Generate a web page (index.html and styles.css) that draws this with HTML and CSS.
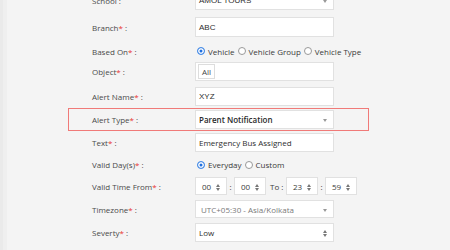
FILE: index.html
```html
<!DOCTYPE html>
<html>
<head>
<meta charset="utf-8">
<link rel="stylesheet" href="styles.css">
</head>
<body>
<div class="page">
  <form class="form">
    <div class="row r-school">
      <label class="lbl">School :</label>
      <div class="ctl select arial">AMOL TOURS<span class="caret"></span></div>
    </div>
    <div class="row r-branch">
      <label class="lbl">Branch<b>*</b> :</label>
      <div class="ctl input arial">ABC</div>
    </div>
    <div class="row r-based">
      <label class="lbl">Based On<b>*</b> :</label>
      <div class="radios">
        <span class="radio on"></span><span class="rtxt">Vehicle</span>
        <span class="radio"></span><span class="rtxt">Vehicle Group</span>
        <span class="radio"></span><span class="rtxt">Vehicle Type</span>
      </div>
    </div>
    <div class="row r-object">
      <label class="lbl">Object<b>*</b> :</label>
      <div class="ctl input tags"><span class="tag">All</span></div>
    </div>
    <div class="row r-name">
      <label class="lbl">Alert Name<b>*</b> :</label>
      <div class="ctl input arial">XYZ</div>
    </div>
    <div class="row r-type highlight">
      <label class="lbl">Alert Type<b>*</b> :</label>
      <div class="ctl select strong">Parent Notification<span class="caret"></span></div>
    </div>
    <div class="row r-text">
      <label class="lbl">Text<b>*</b> :</label>
      <div class="ctl input">Emergency Bus Assigned</div>
    </div>
    <div class="row r-days">
      <label class="lbl">Valid Day(s)<b>*</b> :</label>
      <div class="radios">
        <span class="radio on"></span><span class="rtxt">Everyday</span>
        <span class="radio"></span><span class="rtxt">Custom</span>
      </div>
    </div>
    <div class="row r-time">
      <label class="lbl">Valid Time From<b>*</b> :</label>
      <div class="times">
        <div class="tbox">00<span class="spin"></span></div>
        <span class="sep">:</span>
        <div class="tbox">00<span class="spin"></span></div>
        <span class="to">To :</span>
        <div class="tbox">23<span class="spin"></span></div>
        <span class="sep">:</span>
        <div class="tbox">59<span class="spin"></span></div>
      </div>
    </div>
    <div class="row r-tz">
      <label class="lbl">Timezone<b>*</b> :</label>
      <div class="ctl select muted">UTC+05:30 - Asia/Kolkata<span class="caret"></span></div>
    </div>
    <div class="row r-sev">
      <label class="lbl">Severty<b>*</b> :</label>
      <div class="ctl select">Low<span class="spin"></span></div>
    </div>
    <div class="row r-checks">
      <span class="lbl"></span>
      <div class="checks">
        <span class="cb"></span><span class="rtxt">SMS</span>
        <span class="cb"></span><span class="rtxt">Email</span>
        <span class="cb"></span><span class="rtxt">Notification</span>
      </div>
    </div>
  </form>
</div>
</body>
</html>
```

FILE: styles.css
```css
* { box-sizing: border-box; }
html, body { margin: 0; padding: 0; }
body {
  background: #f4f4f4;
  font-family: "Open Sans", "Noto Sans", sans-serif;
  font-size: 8px;
  color: #444;
  overflow: hidden;
}
.page {
  height: 250px;
  border-left: 3px solid #eaeaea;
  box-shadow: inset 4px 0 0 #efefef;
  overflow: hidden;
}
.form {
  margin: -9px 0 0 0;
  padding-left: 89px;
  display: flex;
  flex-direction: column;
}
.row {
  display: flex;
  align-items: center;
}
.lbl {
  width: 103px;
  flex: none;
  color: #4a4a4a;
}
.lbl b { color: #e8332f; font-weight: normal; }

.ctl {
  width: 139px;
  height: 19px;
  background: #fff;
  border: 1px solid #e1e1e1;
  display: flex;
  align-items: center;
  padding: 0 0 0 3px;
  color: #2e2e2e;
  position: relative;
}
.arial { font-family: "Liberation Sans", Arial, sans-serif; font-size: 8px; }
.strong { font-weight: 600; color: #2a2a2a; }
.muted { color: #7a7a7a; padding-left: 5px; }
.caret {
  position: absolute;
  right: 6px;
  top: 8px;
  border-left: 2px solid transparent;
  border-right: 2px solid transparent;
  border-top: 3px solid #999;
}
.spin {
  position: absolute;
  right: 6px;
  top: 6px;
  width: 4px;
  height: 7px;
}
.spin::before, .spin::after {
  content: "";
  position: absolute;
  left: 0;
  border-left: 2px solid transparent;
  border-right: 2px solid transparent;
}
.spin::before { top: 0; border-bottom: 3px solid #777; }
.spin::after { bottom: 0; border-top: 3px solid #777; }

.r-school { margin-bottom: 7px; }
.r-branch .ctl { height: 20px; }
.r-based { height: 22px; margin-top: 3px; }
.r-object .ctl { padding-left: 2px; }
.r-object { margin-bottom: 6px; }
.r-name { margin-bottom: 2px; }
.tag {
  border: 1px solid #ddd;
  padding: 0 3px;
  height: 15px;
  display: flex;
  align-items: center;
  color: #444;
}
.highlight {
  margin-left: -24px;
  padding-left: 23px;
  width: 301px;
  height: 23px;
  border: 1px solid #f07a78;
  margin-bottom: 2px;
}
.r-days { height: 25px; }
.r-time { margin-bottom: 5px; }
.r-tz { margin-bottom: 5px; }
.r-tz .ctl { height: 18px; }
.r-checks { height: 20px; }

.radios, .checks {
  display: flex;
  align-items: center;
  padding-left: 2px;
  color: #3a3a3a;
}
.radio {
  width: 8px;
  height: 8px;
  border-radius: 50%;
  border: 1px solid #999;
  background: #fff;
  margin-right: 3px;
  flex: none;
}
.radio.on {
  border: 1px solid #4a8fe7;
  background: #1f6fe0;
  box-shadow: inset 0 0 0 1.5px #fff;
}
.rtxt { margin-right: 3px; }
.cb {
  width: 8px;
  height: 8px;
  border: 1px solid #888;
  background: #fff;
  margin-right: 3px;
}
.checks { margin-top: 8px; }

.times { display: flex; align-items: center; color: #3a3a3a; }
.tbox {
  width: 32px;
  height: 18px;
  background: #fff;
  border: 1px solid #e1e1e1;
  position: relative;
  display: flex;
  align-items: center;
  padding-left: 6px;
}
.sep { width: 7px; text-align: center; }
.to { width: 20px; padding-left: 4px; }
```
